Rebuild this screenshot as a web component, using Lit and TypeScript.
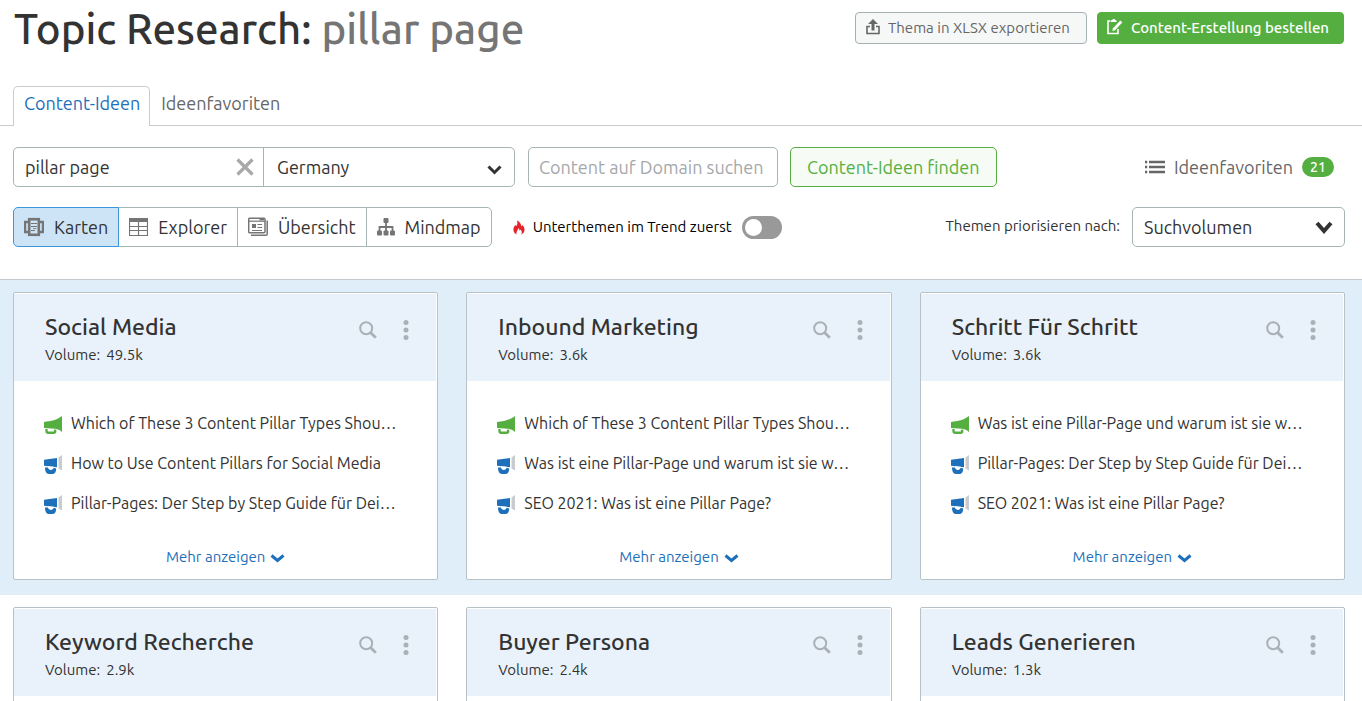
import { LitElement, html, css, svg, nothing } from "lit";
import { customElement, property, state } from "lit/decorators.js";

interface Headline {
  text: string;
  top?: boolean;
}

interface Topic {
  name: string;
  volume: string;
  headlines: Headline[];
}

const ROWS: Topic[][] = [
  [
    {
      name: "Social Media",
      volume: "49.5k",
      headlines: [
        { text: "Which of These 3 Content Pillar Types Shou…", top: true },
        { text: "How to Use Content Pillars for Social Media" },
        { text: "Pillar-Pages: Der Step by Step Guide für Dei…" },
      ],
    },
    {
      name: "Inbound Marketing",
      volume: "3.6k",
      headlines: [
        { text: "Which of These 3 Content Pillar Types Shou…", top: true },
        { text: "Was ist eine Pillar-Page und warum ist sie w…" },
        { text: "SEO 2021: Was ist eine Pillar Page?" },
      ],
    },
    {
      name: "Schritt Für Schritt",
      volume: "3.6k",
      headlines: [
        { text: "Was ist eine Pillar-Page und warum ist sie w…", top: true },
        { text: "Pillar-Pages: Der Step by Step Guide für Dei…" },
        { text: "SEO 2021: Was ist eine Pillar Page?" },
      ],
    },
  ],
  [
    { name: "Keyword Recherche", volume: "2.9k", headlines: [] },
    { name: "Buyer Persona", volume: "2.4k", headlines: [] },
    { name: "Leads Generieren", volume: "1.3k", headlines: [] },
  ],
];

const icon = (w: number, h: number, body: unknown) =>
  html`<svg width=${w} height=${h} viewBox="0 0 ${w} ${h}" aria-hidden="true">${body}</svg>`;

const chevron = (w: number, h: number, stroke: number) =>
  icon(w, h, svg`<path d="M${stroke / 2} ${stroke / 2 + 1} L${w / 2} ${h - stroke / 2 - 1} L${w - stroke / 2} ${stroke / 2 + 1}"
    fill="none" stroke="currentColor" stroke-width=${stroke}/>`);

const exportIcon = icon(14, 16, svg`
  <path d="M7 0 L12 5 H8.5 V11.5 H5.5 V5 H2 Z" fill="currentColor"/>
  <path d="M4 7.5 H1 V14.5 H13 V7.5 H10" fill="none" stroke="currentColor" stroke-width="1.6"/>`);

const composeIcon = icon(16, 16, svg`
  <path d="M3.5 2 H1 V14.5 H11 V10" fill="none" stroke="currentColor" stroke-width="1.6"/>
  <path d="M4 1.2 H5 L6 0 H7.5 L8.5 1.2 H9.5 V3 H4 Z" fill="currentColor"/>
  <path d="M13.3 1.6 L15.3 3.5 L8 11.2 L5.3 12 L6 9.3 Z" fill="currentColor"/>`);

const cardsIcon = icon(20, 20, svg`
  <path d="M5 5 H1 V15 H5 M15 5 H19 V15 H15" fill="none" stroke="currentColor" stroke-width="2.4"/>
  <rect x="5.2" y="2.2" width="9.6" height="15.6" fill="none" stroke="currentColor" stroke-width="2.6"/>
  <path d="M7 6.5 H13 M7 9.5 H13 M7 13.5 H11" stroke="currentColor" stroke-width="1.2"/>
  <path d="M9 11.5 H12.5" stroke="currentColor" stroke-width="0.8"/>`);

const tableIcon = icon(19, 20, svg`
  <rect x="0" y="1" width="19" height="4" fill="currentColor"/>
  <path d="M0.5 5 V18.5 H18.5 V5 M0.5 9.5 H18.5 M0.5 13.5 H18.5 M9.5 5 V18.5"
    fill="none" stroke="currentColor" stroke-width="1.2"/>`);

const overviewIcon = icon(20, 20, svg`
  <rect x="0.7" y="1.2" width="16.3" height="14.5" rx="1" fill="none" stroke="currentColor" stroke-width="1.5"/>
  <path d="M1 4.2 H17" stroke="currentColor" stroke-width="1.2"/>
  <path d="M11.5 2.6 H16" stroke="currentColor" stroke-width="1.5"/>
  <path d="M3 18.3 H18 Q19.2 18.3 19.2 17 V3.5" fill="none" stroke="currentColor" stroke-width="1.5"/>
  <rect x="4" y="7" width="4" height="4" fill="currentColor"/>
  <path d="M9.5 7.5 H14 M9.5 10.5 H14 M4 13.5 H14" stroke="currentColor" stroke-width="1.2"/>`);

const mindmapIcon = icon(18, 18, svg`
  <rect x="6.5" y="0" width="5" height="5" rx="1" fill="currentColor"/>
  <path d="M9 4 V13 M2.5 13 V9 H15.5 V13" fill="none" stroke="currentColor" stroke-width="1.8"/>
  <rect x="0" y="12.5" width="5" height="5" rx="1" fill="currentColor"/>
  <rect x="6.5" y="12.5" width="5" height="5" rx="1" fill="currentColor"/>
  <rect x="13" y="12.5" width="5" height="5" rx="1" fill="currentColor"/>`);

const flameIcon = icon(12, 15, svg`
  <path d="M3.5 14.5 C0.8 13 0 10.5 0.6 8 C1 6.5 2 6 2.3 4.8 L3 6.2 C4.8 4.8 4.6 2.5 3.9 0.5
    C6.8 1.6 8.2 3.8 8.2 6.4 L9.4 5 C11.2 7 12 9 11.3 11.3 C10.9 12.7 10 13.8 8.3 14.5
    C9.3 12.8 8.8 11 7.4 9.6 L6.7 10.9 C6.5 9.5 6.2 8.7 5.3 8 C5.4 10 3 11 3.5 14.5 Z" fill="#e62129"/>`);

const listIcon = icon(20, 14, svg`
  <path d="M0 2 H2.2 M0 7 H2.2 M0 12 H2.2 M4 2 H20 M4 7 H20 M4 12 H20"
    stroke="currentColor" stroke-width="2.6"/>`);

const closeIcon = icon(18, 18, svg`
  <path d="M1.5 1.5 L16.5 16.5 M16.5 1.5 L1.5 16.5" stroke="currentColor" stroke-width="3.2"/>`);

const searchIcon = icon(18, 18, svg`
  <circle cx="7.2" cy="7.2" r="6" fill="none" stroke="currentColor" stroke-width="2"/>
  <path d="M11.5 11.5 L16.8 16.8" stroke="currentColor" stroke-width="2.8"/>`);

const dotsIcon = icon(6, 20, svg`
  <circle cx="3" cy="2.5" r="2.5" fill="currentColor"/>
  <circle cx="3" cy="10" r="2.5" fill="currentColor"/>
  <circle cx="3" cy="17.5" r="2.5" fill="currentColor"/>`);

const hornGreen = icon(18, 18, svg`
  <path d="M18 0 V16 C16 14 14 13.2 11 12.8 L0 12 V6 C7 5 13 4 18 0 Z" fill="#55af40"/>
  <path d="M2.5 13 V15 Q2.5 16.7 4.2 16.7 H9.5 Q11.2 16.7 11.2 15.2 L11 13.6" fill="none" stroke="#55af40" stroke-width="2.4"/>`);

const hornBlue = icon(18, 19, svg`
  <path d="M18 0 V15.5 L14.5 13.5 V2.5 Z" fill="#c9cccf"/>
  <path d="M0 4.8 L13 3 V12.2 L0 10.8 Z" fill="#1d70b9"/>
  <path d="M1 12.6 L4 12.4 C5 15.4 8.6 15.4 9.6 12.8 L12.2 13.4 C12.2 17 10.5 19 8.5 19 H4.8 C2.5 19 1 16.5 1 12.6 Z" fill="#1d70b9"/>
  <path d="M3.8 11.2 C4.4 15.8 9.2 15.8 9.8 11.8 Z" fill="#ffffff"/>`);

@customElement("topic-card")
class TopicCard extends LitElement {
  @property({ attribute: false }) topic!: Topic;

  static styles = css`
    :host {
      display: block;
      min-width: 0;
      min-height: 288px;
      background: #ffffff;
      border: 1px solid #b7c1c6;
      border-radius: 2px;
    }
    .head {
      display: flex;
      align-items: flex-start;
      justify-content: space-between;
      margin: 1px 1px 0 0;
      padding: 17px 27px 13px 31px;
      background: #e9f2fa;
    }
    .name {
      margin: 0;
      font-size: 23px;
      line-height: 31px;
      font-weight: 500;
      color: #333333;
    }
    .volume {
      margin: 0;
      font-size: 15px;
      line-height: 26px;
      color: #333333;
    }
    .value {
      margin-left: 6px;
    }
    .tools {
      display: flex;
      align-items: center;
      gap: 26px;
      padding-top: 9px;
    }
    .tool {
      display: flex;
      padding: 0;
      border: 0;
      background: none;
      color: #a9b1b6;
      cursor: pointer;
    }
    .list {
      list-style: none;
      margin: 0;
      padding: 22px 24px 0 30px;
    }
    .item {
      display: flex;
      align-items: center;
      gap: 9px;
      height: 40px;
      font-size: 16px;
      color: #333333;
      white-space: nowrap;
    }
    .horn {
      display: flex;
      flex: none;
      padding-top: 3px;
    }
    .more {
      display: flex;
      align-items: center;
      gap: 5px;
      margin: 22px auto 0;
      padding: 0;
      border: 0;
      background: none;
      font: inherit;
      font-size: 15px;
      line-height: 24px;
      color: #1d70b9;
      cursor: pointer;
    }
    .more svg {
      margin-top: 2px;
    }
  `;

  render() {
    const { name, volume, headlines } = this.topic;
    return html`
      <div class="head">
        <div>
          <h2 class="name">${name}</h2>
          <p class="volume">Volume:<span class="value">${volume}</span></p>
        </div>
        <div class="tools">
          <button class="tool" aria-label="Suche">${searchIcon}</button>
          <button class="tool" aria-label="Menü">${dotsIcon}</button>
        </div>
      </div>
      ${headlines.length
        ? html`<ul class="list">
              ${headlines.map(
                (h) => html`<li class="item">
                  <span class="horn">${h.top ? hornGreen : hornBlue}</span>
                  <span>${h.text}</span>
                </li>`
              )}
            </ul>
            <button class="more">Mehr anzeigen ${chevron(15, 10, 3)}</button>`
        : nothing}
    `;
  }
}

@customElement("app-root")
class AppRoot extends LitElement {
  @state() view = "Karten";

  static styles = css`
    :host {
      display: block;
      height: 100vh;
      overflow-y: auto;
      scrollbar-width: none;
      background: #ffffff;
      color: #333333;
      font-family: Ubuntu, "Noto Sans", "Open Sans", sans-serif;
      font-size: 18px;
    }
    * {
      box-sizing: border-box;
    }
    button,
    input,
    select {
      font: inherit;
      color: inherit;
      margin: 0;
    }
    button {
      cursor: pointer;
    }
    .header {
      display: flex;
      align-items: flex-start;
      justify-content: space-between;
      padding: 0 18px 0 14px;
      height: 86px;
    }
    .title {
      margin: 0;
      font-size: 42px;
      line-height: 58px;
      font-weight: 500;
    }
    .query {
      color: #757575;
    }
    .actions {
      display: flex;
      gap: 10px;
      padding-top: 12px;
    }
    .action {
      display: flex;
      align-items: center;
      gap: 8px;
      height: 32px;
      padding: 0 16px 2px 10px;
      border: 1px solid #a6b0b3;
      border-radius: 4px;
      background: #f6f8f8;
      color: #666666;
      font-size: 15px;
      white-space: nowrap;
    }
    .order {
      padding: 0 14px 2px 9px;
      border-color: #55af40;
      background: #55af40;
      color: #ffffff;
      font-weight: 500;
    }
    .tabs {
      display: flex;
      padding-left: 13px;
      border-bottom: 1px solid #c9cccf;
    }
    .tab {
      height: 39px;
      padding: 0 11px;
      line-height: 35px;
      color: #666666;
      text-decoration: none;
    }
    .current {
      height: 40px;
      margin-bottom: -1px;
      padding: 0 9px 0 10px;
      border: 1px solid #c9cccf;
      border-bottom: 0;
      border-radius: 5px 5px 0 0;
      background: #ffffff;
      color: #1d70b9;
      line-height: 33px;
    }
    .bar {
      display: flex;
      align-items: center;
      height: 40px;
      padding: 0 17px 0 13px;
      margin-top: 21px;
    }
    .second {
      margin-top: 20px;
      margin-bottom: 32px;
    }
    .combo {
      display: flex;
      width: 502px;
      height: 40px;
      margin-right: 13px;
      border: 1px solid #a6b5b5;
      border-radius: 5px;
    }
    .keyword {
      display: flex;
      align-items: center;
      flex: 1 1 50%;
      min-width: 0;
      padding-right: 9px;
      border-right: 1px solid #a6b5b5;
    }
    .input {
      flex: 1 1 0;
      width: 100%;
      min-width: 0;
      padding: 0 0 0 11px;
      border: 0;
      outline: 0;
      background: none;
    }
    .clear {
      display: flex;
      padding: 0;
      border: 0;
      background: none;
      color: #a9a9a9;
    }
    .pick {
      display: grid;
      align-items: center;
      flex: 1 1 50%;
      min-width: 0;
    }
    .pick > * {
      grid-area: 1 / 1;
    }
    .pick svg {
      justify-self: end;
      margin-right: 12px;
      margin-top: 4px;
      pointer-events: none;
    }
    .select {
      appearance: none;
      width: 100%;
      height: 38px;
      padding: 0 36px 0 13px;
      border: 0;
      outline: 0;
      background: none;
    }
    .domain {
      width: 250px;
      height: 40px;
      margin-right: 12px;
      padding: 0 10px;
      border: 1px solid #a6b5b5;
      border-radius: 5px;
      outline: 0;
    }
    .domain::placeholder {
      color: #a5a8aa;
      opacity: 1;
    }
    .find {
      height: 40px;
      padding: 0 16px;
      border: 1px solid #55af40;
      border-radius: 5px;
      background: #f6fbf5;
      color: #55af40;
    }
    .favorites {
      display: flex;
      align-items: center;
      gap: 9px;
      margin-left: auto;
      margin-right: 11px;
      line-height: 20px;
      color: #666666;
      text-decoration: none;
    }
    .badge {
      width: 32px;
      border-radius: 10px;
      background: #55af40;
      color: #ffffff;
      font-size: 14px;
      line-height: 20px;
      font-weight: 500;
      text-align: center;
    }
    .views {
      display: flex;
    }
    .view {
      display: flex;
      align-items: center;
      gap: 10px;
      height: 40px;
      margin-left: -1px;
      padding: 0 10px;
      border: 1px solid #a6b5b5;
      background: #ffffff;
    }
    .view:first-child {
      margin-left: 0;
      border-radius: 5px 0 0 5px;
    }
    .view:last-child {
      border-radius: 0 5px 5px 0;
    }
    .view svg {
      color: #757575;
    }
    .selected {
      z-index: 1;
      border-color: #3b97dd;
      background: #cde4f7;
    }
    .trend {
      display: flex;
      align-items: center;
      gap: 8px;
      margin-left: 21px;
      color: #000000;
      font-size: 15px;
      line-height: 20px;
    }
    .switch {
      appearance: none;
      display: flex;
      align-items: center;
      width: 40px;
      height: 23px;
      margin-left: 2px;
      padding: 3px;
      border-radius: 12px;
      background: #999999;
    }
    .switch::before {
      content: "";
      width: 17px;
      height: 17px;
      border-radius: 50%;
      background: #ffffff;
    }
    .switch:checked {
      justify-content: flex-end;
      background: #55af40;
    }
    .sort {
      margin-left: auto;
      margin-right: 12px;
      padding-bottom: 3px;
      font-size: 15px;
    }
    .order-by {
      flex: 0 0 213px;
      border: 1px solid #a6b5b5;
      border-radius: 5px;
    }
    .order-by .select {
      padding-left: 11px;
    }
    .order-by svg {
      margin-right: 11px;
      margin-top: 0;
    }
    .band {
      display: grid;
      grid-template-columns: repeat(3, 1fr);
      gap: 28px;
      padding: 12px 17px 15px 13px;
    }
    .tinted {
      border-top: 1px solid #c5cacf;
      background: #e0eef9;
    }
  `;

  private renderViews() {
    const views: [string, unknown][] = [
      ["Karten", cardsIcon],
      ["Explorer", tableIcon],
      ["Übersicht", overviewIcon],
      ["Mindmap", mindmapIcon],
    ];
    return views.map(
      ([name, glyph]) => html`<button
        class="view ${this.view === name ? "selected" : ""}"
        aria-pressed=${this.view === name}
        @click=${() => (this.view = name)}
      >
        ${glyph}<span>${name}</span>
      </button>`
    );
  }

  render() {
    return html`
      <header class="header">
        <h1 class="title">Topic Research: <span class="query">pillar page</span></h1>
        <div class="actions">
          <button class="action">${exportIcon}<span>Thema in XLSX exportieren</span></button>
          <button class="action order">${composeIcon}<span>Content-Erstellung bestellen</span></button>
        </div>
      </header>
      <nav class="tabs">
        <a class="tab current" href="#ideen" aria-current="page">Content-Ideen</a>
        <a class="tab" href="#favoriten">Ideenfavoriten</a>
      </nav>
      <div class="bar">
        <div class="combo">
          <div class="keyword">
            <input class="input" type="text" aria-label="Thema" .value=${"pillar page"} />
            <button class="clear" aria-label="Löschen">${closeIcon}</button>
          </div>
          <div class="pick">
            <select class="select" aria-label="Land">
              <option>Germany</option>
            </select>
            ${chevron(15, 11, 3)}
          </div>
        </div>
        <input class="domain" type="text" aria-label="Domain" placeholder="Content auf Domain suchen" />
        <button class="find">Content-Ideen finden</button>
        <a class="favorites" href="#favoriten">
          ${listIcon}<span>Ideenfavoriten</span><span class="badge">21</span>
        </a>
      </div>
      <div class="bar second">
        <div class="views">${this.renderViews()}</div>
        <label class="trend">
          ${flameIcon}<span>Unterthemen im Trend zuerst</span>
          <input class="switch" type="checkbox" role="switch" />
        </label>
        <label class="sort" for="sort">Themen priorisieren nach:</label>
        <div class="pick order-by">
          <select class="select" id="sort">
            <option>Suchvolumen</option>
          </select>
          ${chevron(18, 14, 4)}
        </div>
      </div>
      <main>
        ${ROWS.map(
          (row, i) => html`<section class="band ${i === 0 ? "tinted" : ""}">
            ${row.map((topic) => html`<topic-card .topic=${topic}></topic-card>`)}
          </section>`
        )}
      </main>
    `;
  }
}
